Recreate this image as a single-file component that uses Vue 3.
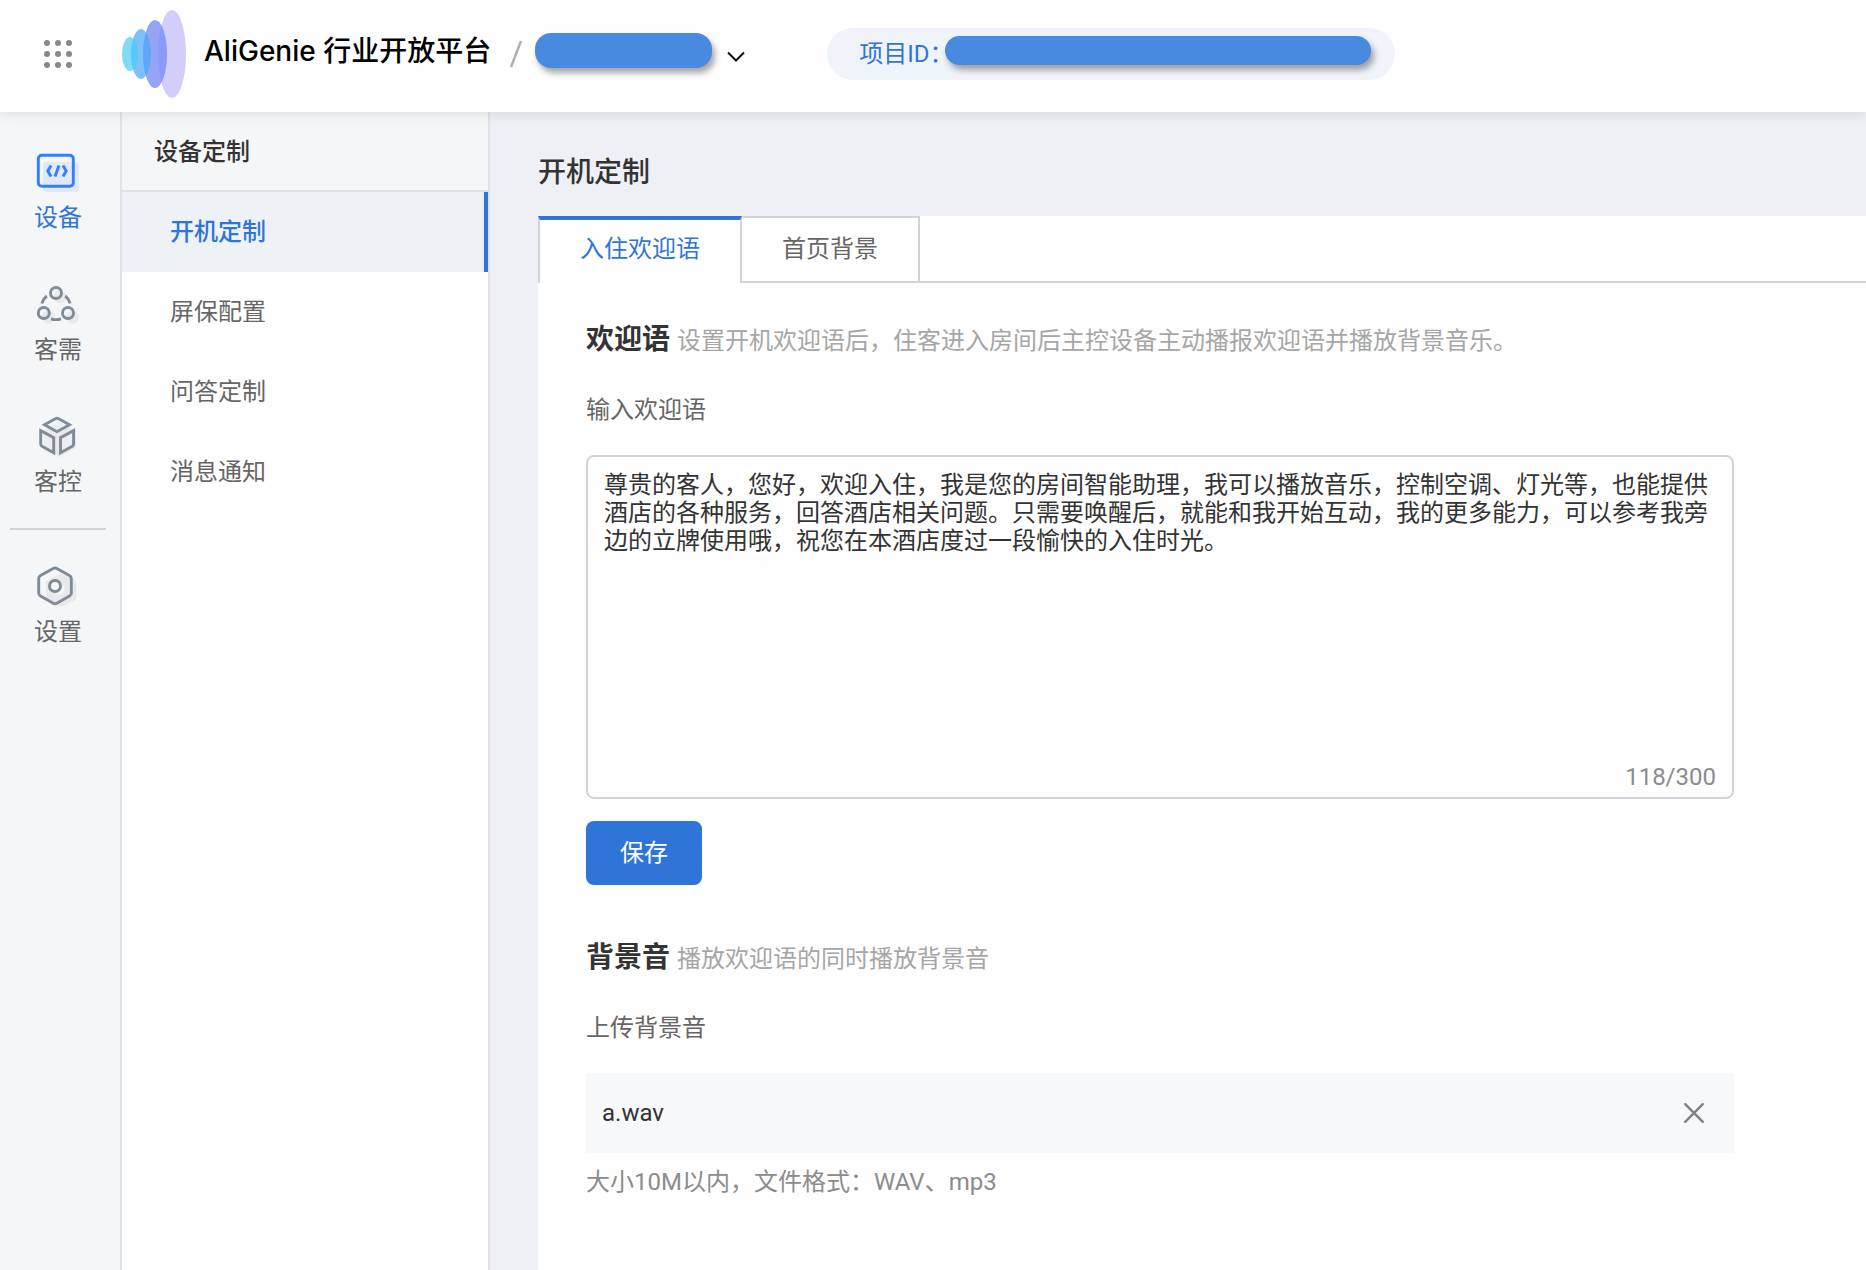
<script setup>
import { ref } from 'vue'

const menu = ['开机定制', '屏保配置', '问答定制', '消息通知']
const activeMenu = ref(0)
const tabs = ['入住欢迎语', '首页背景']
const activeTab = ref(0)
const welcome = ref('尊贵的客人，您好，欢迎入住，我是您的房间智能助理，我可以播放音乐，控制空调、灯光等，也能提供酒店的各种服务，回答酒店相关问题。只需要唤醒后，就能和我开始互动，我的更多能力，可以参考我旁边的立牌使用哦，祝您在本酒店度过一段愉快的入住时光。')
const count = ref(118)
const dots = [3, 14, 25]

function updateCount() {
  count.value = welcome.value.length
}
</script>

<template>
  <div class="app">
    <header class="topbar">
      <button class="apps" type="button" aria-label="应用">
        <svg width="28" height="28" viewBox="0 0 28 28" fill="#888">
          <template v-for="y in dots" :key="y">
            <circle v-for="x in dots" :key="x" :cx="x" :cy="y" r="3" />
          </template>
        </svg>
      </button>
      <svg class="logo" width="64" height="90" viewBox="0 0 64 90">
        <ellipse cx="50" cy="45" rx="14" ry="44" fill="#d2cdf9" />
        <ellipse cx="33" cy="45" rx="12" ry="34" fill="#7789f4" fill-opacity=".77" />
        <ellipse cx="19" cy="45" rx="10" ry="25" fill="#44a8f6" fill-opacity=".7" />
        <ellipse cx="8" cy="45" rx="8" ry="17" fill="#4ccbf5" fill-opacity=".7" />
      </svg>
      <div class="crumbs">
        <span class="brand">AliGenie 行业开放平台</span>
        <svg class="slash" width="14" height="28" viewBox="0 0 14 28" fill="none" stroke="#b0b0b0" stroke-width="2.500">
          <path d="M12 1L2 27" />
        </svg>
        <button class="project" type="button" aria-label="切换项目">
          <span class="mask mask-name"></span>
          <svg class="chevron" width="20" height="12" viewBox="0 0 20 12" fill="none" stroke="#111" stroke-width="2">
            <path d="M2 1.500l8 8 8-8" />
          </svg>
        </button>
      </div>
      <div class="project-id">
        <span>项目ID：</span>
        <span class="mask mask-id"></span>
      </div>
    </header>

    <div class="body">
      <nav class="rail">
        <a class="rail-item active" href="#device">
          <svg width="48" height="48" viewBox="0 0 48 48" fill="none">
            <rect x="9" y="12" width="36" height="30" rx="3" fill="#e1e8f7" />
            <rect x="4.300" y="5.300" width="35" height="31" rx="3.500" stroke="#3080fe" stroke-width="2.900" />
            <path d="M17 15.500l-3.200 5.500 3.200 5.500M25 15.500l-4 11M29 15.500l3.200 5.500-3.200 5.500" stroke="#3080fe" stroke-width="2.900" />
          </svg>
          <span>设备</span>
        </a>
        <a class="rail-item" href="#demand">
          <svg width="48" height="48" viewBox="0 0 48 48" fill="none">
            <g fill="#e8e9eb">
              <circle cx="26" cy="15" r="6.500" />
              <circle cx="14" cy="35" r="6.500" />
              <circle cx="38.500" cy="35" r="6.500" />
            </g>
            <g stroke="#808b98" stroke-width="2.900">
              <circle cx="22" cy="11" r="5.500" />
              <circle cx="9.800" cy="31" r="5.500" />
              <circle cx="34" cy="31" r="5.500" />
              <path d="M12.800 14Q9 17 7.800 21.500M31.300 14Q35 17 36.200 21.500M17 36.800Q22 38.400 27 36.800" />
            </g>
          </svg>
          <span>客需</span>
        </a>
        <a class="rail-item" href="#control">
          <svg width="48" height="48" viewBox="0 0 48 48" fill="none">
            <path d="M25 8l17 9v17l-17 9-15-9V17z" fill="#e8e9eb" />
            <g stroke="#808b98" stroke-width="2.900">
              <path fill="#f4f6f8" fill-opacity=".4" d="M21.800 4.500q1.200-.6 2.400 0L35.500 10.800 23 17.700 10.500 10.800z" />
              <path fill="#f4f6f8" fill-opacity=".4" d="M6.700 16.600L19.700 23.600V38.700L8 32.200q-1.300-.8-1.300-2.400z" />
              <path fill="#f4f6f8" fill-opacity=".4" d="M39.600 16.600L26.500 23.600V38.700L38.300 32.200q1.300-.8 1.300-2.400z" />
            </g>
          </svg>
          <span>客控</span>
        </a>
        <hr class="rail-line" />
        <a class="rail-item" href="#settings">
          <svg width="48" height="48" viewBox="0 0 48 48" fill="none">
            <path d="M27 9l14 8q1.500 1 1.500 3v13q0 2-1.500 3l-11.500 6q-2 1-4 0L12 35V17z" fill="#e8e9eb" />
            <circle cx="25" cy="25" r="5.500" fill="#f4f6f8" />
            <path d="M19.200 4.500q1.800-1 3.600 0L35.500 11.500q1.800 1 1.800 3V29q0 2-1.800 3L22.800 39.200q-1.800 1-3.600 0L6.500 32q-1.800-1-1.800-3V14.500q0-2 1.800-3z" stroke="#808b98" stroke-width="2.900" />
            <circle cx="21" cy="22" r="5.500" fill="#f4f6f8" stroke="#808b98" stroke-width="3" />
          </svg>
          <span>设置</span>
        </a>
      </nav>

      <aside class="menu">
        <h2 class="menu-title">设备定制</h2>
        <a
          v-for="(item, i) in menu"
          :key="item"
          href="#"
          class="menu-item"
          :class="{ active: i === activeMenu }"
          @click.prevent="activeMenu = i"
        >{{ item }}</a>
      </aside>

      <main class="main">
        <h1 class="page-title">开机定制</h1>
        <div class="panel">
          <div class="tabs" role="tablist">
            <button
              v-for="(tab, i) in tabs"
              :key="tab"
              type="button"
              role="tab"
              class="tab"
              :class="{ active: i === activeTab }"
              :aria-selected="i === activeTab"
              @click="activeTab = i"
            >{{ tab }}</button>
            <span class="tabs-rest"></span>
          </div>

          <div class="content">
            <section>
              <div class="section-head">
                <h3>欢迎语</h3>
                <p>设置开机欢迎语后，住客进入房间后主控设备主动播报欢迎语并播放背景音乐。</p>
              </div>
              <label class="label" for="welcome">输入欢迎语</label>
              <div class="editor">
                <textarea id="welcome" v-model="welcome" maxlength="300" spellcheck="false" @input="updateCount"></textarea>
                <span class="count">{{ count }}/300</span>
              </div>
              <button class="save" type="button">保存</button>
            </section>

            <section class="sound">
              <div class="section-head">
                <h3>背景音</h3>
                <p>播放欢迎语的同时播放背景音</p>
              </div>
              <div class="label">上传背景音</div>
              <div class="file">
                <span>a.wav</span>
                <button class="remove" type="button" aria-label="删除">
                  <svg width="24" height="24" viewBox="0 0 24 24" fill="none" stroke="#808080" stroke-width="2.400" stroke-linecap="round">
                    <path d="M3.200 3.200l17.600 17.600M20.800 3.200L3.200 20.800" />
                  </svg>
                </button>
              </div>
              <p class="hint">大小10M以内，文件格式：WAV、mp3</p>
            </section>
          </div>
        </div>
      </main>
    </div>
  </div>
</template>

<style>
body {
  margin: 0;
}
</style>

<style scoped>
.app {
  display: flex;
  flex-direction: column;
  min-height: 100vh;
  font-family: Roboto, "Noto Sans CJK SC", sans-serif;
  font-size: 24px;
  line-height: 32px;
  color: #666;
  background: #fefefe;
}
.app *,
.app {
  box-sizing: border-box;
}
h1, h2, h3, p {
  margin: 0;
}
button {
  padding: 0;
  border: 0;
  background: none;
  color: inherit;
  font: inherit;
  cursor: pointer;
}
a {
  color: inherit;
  text-decoration: none;
}
svg {
  display: block;
  flex: none;
}

.topbar {
  position: relative;
  z-index: 1;
  display: flex;
  align-items: center;
  height: 112px;
  padding: 0 44px 4px;
  background: #fefefe;
  box-shadow: 0 2px 12px rgba(0, 0, 0, 0.1);
}
.logo {
  margin-left: 50px;
}
.crumbs {
  display: flex;
  align-items: center;
  margin-left: 18px;
  padding-bottom: 7px;
}
.brand {
  font-family: Inter, "Noto Sans CJK SC", sans-serif;
  font-size: 28px;
  font-weight: 500;
  line-height: 40px;
  color: #000;
  white-space: nowrap;
}
.slash {
  margin: 6px 12px 0 18px;
}
.project {
  display: flex;
  align-items: center;
}
.mask {
  background: #488adf;
  box-shadow: 3px 5px 6px rgba(0, 0, 0, 0.35);
}
.mask-name {
  width: 177px;
  height: 35px;
  border-radius: 16px;
}
.chevron {
  margin: 12px 0 0 14px;
}
.project-id {
  display: flex;
  align-items: center;
  height: 52px;
  margin-left: 81px;
  padding: 0 24px 0 32px;
  border-radius: 26px;
  background: #f0f3fa;
  color: #2f75d8;
  white-space: nowrap;
}
.mask-id {
  width: 426px;
  height: 29px;
  margin: 0 0 8px -8px;
  border-radius: 15px;
}

.body {
  display: flex;
  flex: 1;
}
.rail {
  display: flex;
  flex: none;
  flex-direction: column;
  align-items: center;
  width: 122px;
  padding: 38px 4px 0 0;
  border-right: 2px solid #e1e2e5;
  background: #f4f6f8;
}
.rail-item {
  display: flex;
  flex-direction: column;
  gap: 4px;
}
.rail-item + .rail-item {
  margin-top: 48px;
}
.rail-item.active {
  color: #2f75d8;
}
.rail-line {
  width: 96px;
  height: 2px;
  margin: 30px 0 34px;
  border: 0;
  background: #cfd3d9;
}

.menu {
  flex: none;
  width: 368px;
  border-right: 2px solid #e1e2e5;
}
.menu-title {
  height: 80px;
  padding: 24px 32px;
  border-bottom: 2px solid #e1e2e5;
  background: #f4f6f8;
  font-size: 24px;
  font-weight: 500;
  color: #333;
}
.menu-item {
  display: block;
  padding: 24px 48px;
}
.menu-item.active {
  border-right: 4px solid #2f75d8;
  background: #eef2f7;
  font-weight: 500;
  color: #2f75d8;
}

.main {
  display: flex;
  flex: 1;
  flex-direction: column;
  min-width: 0;
  padding-left: 48px;
  background: #eff0f5;
}
.page-title {
  padding: 41px 0 23px;
  font-size: 28px;
  font-weight: 500;
  line-height: 40px;
  color: #333;
}
.panel {
  flex: 1;
  background: #fefefe;
}
.tabs {
  display: flex;
  height: 67px;
}
.tab {
  padding: 0 40px 2px;
  border: 2px solid #d0d4da;
  border-left: 0;
}
.tab.active {
  padding-bottom: 6px;
  border-top: 4px solid #2f75d8;
  border-bottom: 0;
  border-left: 2px solid #d0d4da;
  color: #2f75d8;
}
.tabs-rest {
  flex: 1;
  border-bottom: 2px solid #d0d4da;
}

.content {
  padding: 37px 48px;
}
.content section {
  max-width: 1148px;
}
.section-head {
  display: flex;
  align-items: baseline;
  gap: 7px;
}
h3 {
  font-size: 28px;
  font-weight: 700;
  line-height: 40px;
  color: #333;
}
.section-head p {
  color: #a6a6a6;
}
.label {
  display: block;
  margin: 34px 0 29px;
}
.editor {
  position: relative;
}
textarea {
  display: block;
  width: 100%;
  height: 344px;
  padding: 14px 16px;
  border: 2px solid #d0d4da;
  border-radius: 8px;
  outline: 0;
  background: #fefefe;
  color: #333;
  font: inherit;
  line-height: 28px;
  resize: none;
}
.count {
  position: absolute;
  right: 18px;
  bottom: 6px;
  color: #8c8c8c;
}
.save {
  width: 116px;
  height: 64px;
  margin-top: 22px;
  border-radius: 8px;
  background: #2f75d8;
  color: #fff;
}
.sound {
  margin-top: 53px;
}
.file {
  display: flex;
  align-items: center;
  justify-content: space-between;
  height: 80px;
  padding: 0 28px 0 16px;
  background: #f7f8fa;
  color: #333;
}
.hint {
  margin-top: 13px;
  color: #8c8c8c;
}
</style>
